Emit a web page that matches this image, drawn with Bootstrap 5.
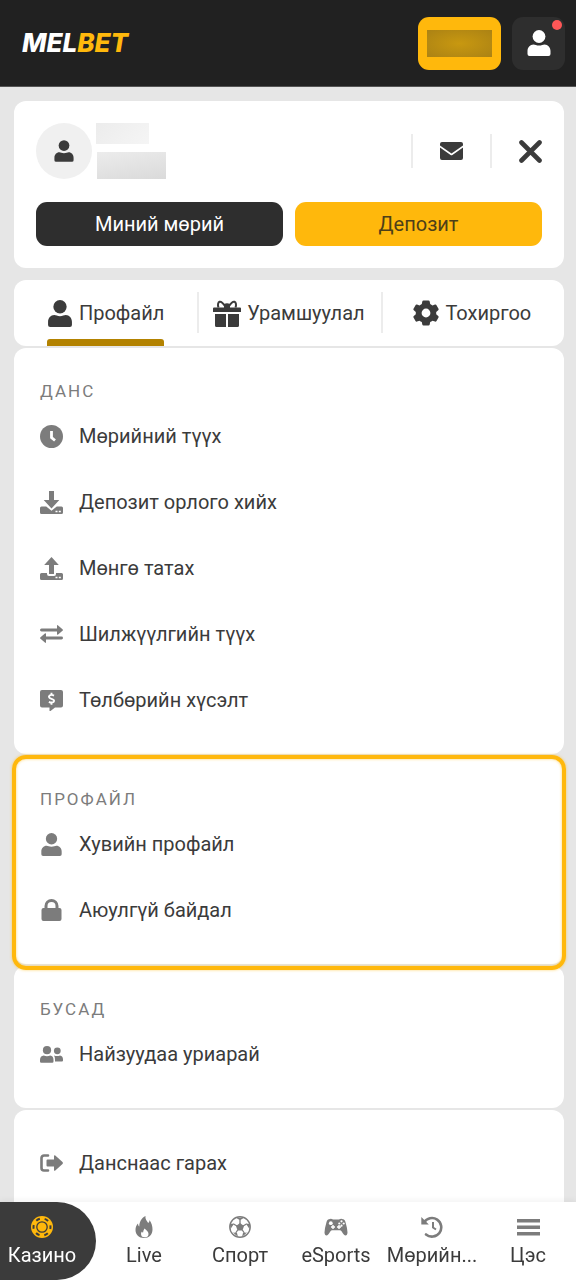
<!DOCTYPE html>
<html lang="mn">
<head>
<meta charset="utf-8">
<meta name="viewport" content="width=device-width, initial-scale=1">
<title>Melbet – Профайл</title>
<link href="https://cdn.jsdelivr.net/npm/bootstrap@5.3.0/dist/css/bootstrap.min.css" rel="stylesheet">
<style>
  :root { --gold: #ffb80c; --ink: #3b3b3b; --muted: #7c7c7c; --page: #e6e6e6; }
  body { background: var(--page); color: var(--ink); font-family: Roboto, "Liberation Sans", sans-serif; font-size: 20px; line-height: 24px; }
  a { color: inherit; text-decoration: none; }
  svg { display: block; flex: none; fill: currentColor; }
  .topbar { background: #212121; height: 87px; border-bottom: 1px solid #555; padding: 0 11px 0 22px; }
  .brand { font-family: Inter, Roboto, sans-serif; font-size: 26px; font-weight: 800; font-style: italic; line-height: 32px; color: #fff; }
  .brand span { color: var(--gold); }
  .sq { height: 53px; border: 0; border-radius: 11px; }
  .sum { width: 83px; background: var(--gold); padding: 0 9px; margin-right: 11px; }
  .sum span { display: block; height: 27px; background: radial-gradient(#c89810, #ab8214); }
  .user { width: 53px; background: #2e2e2e; color: #fff; }
  .dot { top: 3px; right: 3px; width: 10px; height: 10px; background: #ff5757; }
  main { padding: 14px 12px 0 14px; }
  .pane { background: #fff; border-radius: 12px; }
  .summary { padding: 22px; }
  .avatar { width: 56px; height: 56px; background: #f0f0f0; }
  .hidden-a { width: 53px; height: 21px; background: linear-gradient(135deg, #ececec, #f5f5f5); }
  .hidden-b { width: 69px; height: 27px; margin-left: 1px; background: linear-gradient(170deg, #ececec, #dadada); }
  .cell { width: 79px; height: 34px; border: 0; border-left: 2px solid #ececec; background: none; color: var(--ink); }
  .cell-end { width: 52px; padding: 0; }
  .acts { margin-top: 23px; gap: 12px; }
  .act { height: 44px; border: 0; border-radius: 11px; color: #fff; background: #2e2e2e; }
  .act-gold { background: var(--gold); color: #4d3f18; }
  .tabs { margin-top: 12px; height: 66px; }
  .tabs li + li::before { content: ""; position: absolute; left: 0; top: 12px; width: 2px; height: 41px; background: #ececec; }
  .tab { height: 66px; gap: 6px; }
  .tab.on { position: relative; }
  .tab.on::after { content: ""; position: absolute; left: 0; right: 0; bottom: 0; height: 7px; background: #b38200; border-radius: 3px 3px 0 0; }
  .sect { margin-top: 2px; padding: 31px 26px 21px; }
  .sect h2 { margin: 0; font-size: 17px; line-height: 24px; font-weight: 400; letter-spacing: 2px; color: var(--muted); }
  .sect a { height: 66px; gap: 16px; }
  .sect svg { color: var(--muted); }
  .picked { position: relative; z-index: 1; }
  .picked::after { content: ""; position: absolute; inset: -1px -2px -6px; border: 4px solid var(--gold); border-radius: 14px; box-shadow: 0 0 3px #ffb80c99, inset 0 0 3px #ffb80c99; pointer-events: none; }
  .last { padding-top: 20px; border-radius: 12px 12px 0 0; }
  .dock { height: 78px; background: #fff; box-shadow: 0 -2px 6px #0000000d; }
  .dock a { height: 78px; gap: 5px; padding-top: 14px; }
  .dock svg { color: var(--muted); }
  .dock .now { background: var(--ink); color: #fff; border-radius: 0 39px 39px 0; padding-right: 12px; }
  .dock .now svg { color: var(--gold); }
</style>
</head>
<body>
<svg width="0" height="0" class="position-absolute" aria-hidden="true">
  <symbol id="person" viewBox="0 0 24 26"><circle cx="12" cy="6.5" r="6.4"/><path d="M6.500 14.500C8 14.500 9.500 15.600 12 15.600s4-1.100 5.500-1.100c3.500 0 6 3 6 6.500v3a2 2 0 0 1-2 2h-19a2 2 0 0 1-2-2v-3c0-3.500 2.500-6.500 6-6.500z"/></symbol>
</svg>
<div class="d-flex flex-column min-vh-100">
  <header class="topbar d-flex align-items-center">
    <a href="#" class="brand me-auto">MEL<span>BET</span></a>
    <button type="button" class="sq sum" aria-label="Баланс"><span></span></button>
    <button type="button" class="sq user position-relative d-flex align-items-center justify-content-center p-0" aria-label="Хэрэглэгч">
      <svg width="24" height="28"><use href="#person"/></svg>
      <span class="dot position-absolute rounded-circle"></span>
    </button>
  </header>

  <main class="d-flex flex-column flex-grow-1">
    <section class="pane summary">
      <div class="d-flex align-items-center">
        <div class="avatar rounded-circle d-flex align-items-center justify-content-center"><svg width="20" height="24"><use href="#person"/></svg></div>
        <div class="ms-1 me-auto"><div class="hidden-a"></div><div class="hidden-b mt-2"></div></div>
        <button type="button" class="cell d-flex align-items-center justify-content-center" aria-label="Мессеж">
          <svg width="23" height="18" viewBox="0 0 23 18"><path d="M2 0h19a2 2 0 0 1 2 2v1.600L11.500 11.500 0 3.600V2a2 2 0 0 1 2-2zM0 5.600l10.600 7.300q.9.500 1.800 0L23 5.600V16a2 2 0 0 1-2 2H2a2 2 0 0 1-2-2z"/></svg>
        </button>
        <button type="button" class="cell cell-end d-flex align-items-center justify-content-end" aria-label="Хаах">
          <svg width="23" height="23" viewBox="0 0 23 23"><path d="M2.500 2.500l18 18M20.500 2.500l-18 18" stroke="currentColor" stroke-width="4.600" stroke-linecap="round"/></svg>
        </button>
      </div>
      <div class="acts d-flex">
        <button type="button" class="act flex-fill w-50">Миний мөрий</button>
        <button type="button" class="act act-gold flex-fill w-50">Депозит</button>
      </div>
    </section>

    <nav class="pane tabs">
      <ul class="row g-0 list-unstyled mb-0">
        <li class="col-4 d-flex justify-content-center position-relative"><a href="#" class="tab on d-flex align-items-center"><svg width="26" height="27"><use href="#person"/></svg>Профайл</a></li>
        <li class="col-4 d-flex justify-content-center position-relative"><a href="#" class="tab d-flex align-items-center"><svg width="28" height="28" viewBox="0 0 28 28"><path d="M1 8.500h26a1 1 0 0 1 1 1V13H0V9.500a1 1 0 0 1 1-1zM2 15h11v13H3.500A1.500 1.500 0 0 1 2 26.500zM15 15h11v11.500a1.500 1.500 0 0 1-1.500 1.500H15z"/><path d="M12 7C10 4 8 2.300 6.500 2.800S4.500 6 5.500 8.500M16 7c2-3 4-4.700 5.500-4.200S23.500 6 22.500 8.500" fill="none" stroke="currentColor" stroke-width="2"/><path d="M11 5q3-1.500 6 0v4h-6z"/></svg>Урамшуулал</a></li>
        <li class="col-4 d-flex justify-content-center position-relative"><a href="#" class="tab d-flex align-items-center"><svg width="26" height="26" viewBox="0 0 26 26"><g fill-rule="evenodd"><path d="M10.500.5h5q1 0 1.200 1l.5 2.600q1.200.6 2.300 1.400L22 4.600q1-.3 1.500.6l2 3.500q.5.900-.3 1.500l-2 1.700v2.400l2 1.700q.8.600.3 1.500l-2 3.500q-.5.900-1.500.6l-2.500-.9q-1.100.8-2.300 1.400l-.5 2.400q-.2 1-1.200 1h-5q-1 0-1.200-1l-.5-2.400q-1.200-.6-2.300-1.400l-2.500.9q-1 .3-1.500-.6l-2-3.500q-.5-.9.300-1.500l2-1.700v-2.400l-2-1.700Q0 9.600.5 8.700l2-3.500Q3 4.300 4 4.600l2.500.9q1.100-.8 2.300-1.400l.5-2.600q.2-1 1.200-1zM13 8.600a4.400 4.400 0 1 0 0 8.800 4.400 4.400 0 0 0 0-8.800z"/></g></svg>Тохиргоо</a></li>
      </ul>
    </nav>

    <section class="pane sect">
      <h2>ДАНС</h2>
      <a href="#" class="d-flex align-items-center"><svg width="23" height="23" viewBox="0 0 23 23"><circle cx="11.500" cy="11.500" r="11.500"/><path d="M11.500 6v6.500l3.500 3" fill="none" stroke="#fff" stroke-width="2.800"/></svg>Мөрийний түүх</a>
      <a href="#" class="d-flex align-items-center"><svg width="23" height="23" viewBox="0 0 23 23"><path d="M1.500 15.500h4.700l5.300 4.200 5.300-4.200h4.700A1.500 1.500 0 0 1 23 17v4.500a1.500 1.500 0 0 1-1.500 1.500h-20A1.500 1.500 0 0 1 0 21.500V17a1.500 1.500 0 0 1 1.500-1.500z"/><path d="M9 0h5v9h5.300l-7.800 8.500L3.700 9H9z"/><path d="M15.500 19.800h2v1.500h-2zM18.800 19.800h2v1.500h-2z" fill="#fff"/></svg>Депозит орлого хийх</a>
      <a href="#" class="d-flex align-items-center"><svg width="23" height="23" viewBox="0 0 23 23"><path d="M11.500 0l7.300 8H14v9H9V8H4.200zM1.500 16H7v1q0 2 2 2h5q2 0 2-2v-1h5.500a1.500 1.500 0 0 1 1.500 1.500v4a1.500 1.500 0 0 1-1.500 1.500h-20A1.500 1.500 0 0 1 0 21.500v-4A1.500 1.500 0 0 1 1.500 16z"/><path d="M15.500 19.800h2v1.500h-2zM18.800 19.800h2v1.500h-2z" fill="#fff"/></svg>Мөнгө татах</a>
      <a href="#" class="d-flex align-items-center"><svg width="23" height="18" viewBox="0 0 23 18"><path d="M1.500 3.500H17V1q0-1.400 1.100-.6l4.400 3.800q.9.800 0 1.600l-4.400 3.700Q17 10.300 17 9V6.400H1.500q-1.500 0-1.500-1.400T1.500 3.500zM21.500 14.500H6V17q0 1.400-1.100.6L.5 13.800q-.9-.8 0-1.600l4.400-3.700Q6 7.700 6 9v2.600h15.500q1.500 0 1.500 1.400t-1.500 1.500z"/></svg>Шилжүүлгийн түүх</a>
      <a href="#" class="d-flex align-items-center"><svg width="23" height="21" viewBox="0 0 23 21"><path d="M2 0h19a2 2 0 0 1 2 2v13.500a2 2 0 0 1-2 2h-6L10.500 21q-1 .5-1-.5v-3H2a2 2 0 0 1-2-2V2a2 2 0 0 1 2-2z"/><path d="M14 5.600Q11.500 4.200 9.600 5.500C8 7 9.500 8.300 11.500 8.800s3.500 1.800 2 3.200q-2 1.200-4.600-.2M11.500 2.700v2M11.500 12.800v2" fill="none" stroke="#fff" stroke-width="1.900"/></svg>Төлбөрийн хүсэлт</a>
    </section>

    <section class="pane sect picked">
      <h2>ПРОФАЙЛ</h2>
      <a href="#" class="d-flex align-items-center"><svg width="23" height="23"><use href="#person"/></svg>Хувийн профайл</a>
      <a href="#" class="d-flex align-items-center"><svg width="23" height="22" viewBox="0 0 23 22"><path d="M3.500 9h1V7a7 7 0 0 1 14 0v2h1a2 2 0 0 1 2 2v9a2 2 0 0 1-2 2h-16a2 2 0 0 1-2-2v-9a2 2 0 0 1 2-2zM7.500 9h8V7a4 4 0 0 0-8 0z" fill-rule="evenodd"/></svg>Аюулгүй байдал</a>
    </section>

    <section class="pane sect">
      <h2>БУСАД</h2>
      <a href="#" class="d-flex align-items-center"><svg width="23" height="17" viewBox="0 0 23 17"><circle cx="7" cy="4.200" r="4.100"/><circle cx="17.300" cy="4.800" r="3.400"/><path d="M3.800 9.400q1.500.8 3.200.8t3.200-.8q3.300.3 3.300 4.600v1.500a1.200 1.200 0 0 1-1.200 1.200H1.200A1.200 1.200 0 0 1 0 15.500V14q0-4.300 3.800-4.600zM14 9.600q3.200 1 6 0 3 .4 3 4v1a1 1 0 0 1-1 1h-7V14q0-3-1-4.400z"/></svg>Найзуудаа уриарай</a>
    </section>

    <section class="pane sect last flex-grow-1">
      <a href="#" class="d-flex align-items-center"><svg width="23" height="18" viewBox="0 0 23 18"><path d="M8 1.500H4A2.500 2.500 0 0 0 1.500 4v10A2.500 2.500 0 0 0 4 16.500h4" fill="none" stroke="currentColor" stroke-width="2.600" stroke-linecap="round"/><path d="M7.500 5.500H14V2q.2-1.400 1.300-.5l7.200 6.600q.8.900 0 1.800l-7.200 6.600Q14.200 17.400 14 16v-3.500H7.500q-1 0-1-1v-5q0-1 1-1z"/></svg>Данснаас гарах</a>
    </section>
  </main>
</div>

<nav class="dock fixed-bottom">
  <div class="row g-0">
    <div class="col-2"><a href="#" class="now d-flex flex-column align-items-center"><svg width="22" height="22" viewBox="0 0 22 22"><circle cx="11" cy="11" r="11"/><circle cx="11" cy="11" r="8.500" fill="none" stroke="#3b3b3b" stroke-width="2" stroke-dasharray="4 4.900" stroke-dashoffset="2"/><circle cx="11" cy="11" r="5.200" fill="none" stroke="#3b3b3b" stroke-width="1.300"/></svg>Казино</a></div>
    <div class="col-2"><a href="#" class="d-flex flex-column align-items-center"><svg width="22" height="22" viewBox="0 0 22 22"><path d="M12.500 0c-.6 3 1.200 4.500 2.700 7 1.200-1 1.300-2 1.300-3 2 3 3 6 3 9.500 0 5-3.500 8.500-8.500 8.500s-8.500-3.500-8.500-8c0-3 1-5 2.500-6.500.1 1.500.4 2.200 1.300 3C6.300 6 8.500 2 12.500 0z"/><path d="M11.500 12.500c2.500 2 4 3.500 4 5.500a3.500 3.500 0 0 1-3.700 3.300A3.600 3.600 0 0 1 8 17.800c0-1 .4-1.800 1-2.300.2.700.5 1 1 1.300.2-1.500.6-3 1.500-4.300z" fill="#fff"/></svg>Live</a></div>
    <div class="col-2"><a href="#" class="d-flex flex-column align-items-center"><svg width="22" height="22" viewBox="0 0 22 22"><circle cx="11" cy="11" r="10.200" fill="#fff" stroke="currentColor" stroke-width="1.400"/><path d="M11 7l4 2.900-1.500 4.700h-5L7 9.900zM7 1.700h8L11 4.300zM1 8l4.200-.4L1.500 13zM21 8l-4.200-.4 3.700 5.400zM4 16.500l4 .5 1 4zM18 16.500l-4 .5-1 4z"/><path d="M11 3.500V8M4.500 8L8 10M17.500 8L14 10M8.700 14l-2 3M13.300 14l2 3" stroke="currentColor" stroke-width="1.300"/></svg>Спорт</a></div>
    <div class="col-2"><a href="#" class="d-flex flex-column align-items-center"><svg width="24" height="22" viewBox="0 0 24 22"><path d="M5 3.300Q7 2.200 9 3.500h6q2-1.300 4-.2 2 .2 2.800 4Q23.500 13 23.500 16.500q-.2 3-2 3-1.500 0-3.800-4-.7-1.300-2-1.300H8.300q-1.300 0-2 1.300-2.300 4-3.800 4-1.800 0-2-3Q.5 13 2.200 7.300 3 3.500 5 3.300z"/><path d="M9 9v4M7 11h4M13 11h4M15 9v4" stroke="#fff" stroke-width="1.400"/><circle cx="6.800" cy="7.200" r="1.900" fill="#fff"/><g fill="#fff"><circle cx="17.500" cy="5.300" r="1.100"/><circle cx="17.500" cy="9.700" r="1.100"/><circle cx="15.300" cy="7.500" r="1.100"/><circle cx="19.700" cy="7.500" r="1.100"/></g></svg>eSports</a></div>
    <div class="col-2"><a href="#" class="d-flex flex-column align-items-center"><svg width="22" height="22" viewBox="0 0 22 22"><path d="M3 6.500A9.300 9.300 0 1 1 5 18.500" fill="none" stroke="currentColor" stroke-width="2.600" stroke-linecap="round"/><path d="M12 6v5.500l3 2" fill="none" stroke="currentColor" stroke-width="2"/><path d="M.3 1v7.500h7.500z"/></svg>Мөрийн...</a></div>
    <div class="col-2"><a href="#" class="d-flex flex-column align-items-center"><svg width="23" height="22" viewBox="0 0 23 22"><path d="M0 3h23v3.500H0zM0 9.500h23V13H0zM0 16h23v3.500H0z"/></svg>Цэс</a></div>
  </div>
</nav>
<script src="https://cdn.jsdelivr.net/npm/bootstrap@5.3.0/dist/js/bootstrap.bundle.min.js"></script>
</body>
</html>
